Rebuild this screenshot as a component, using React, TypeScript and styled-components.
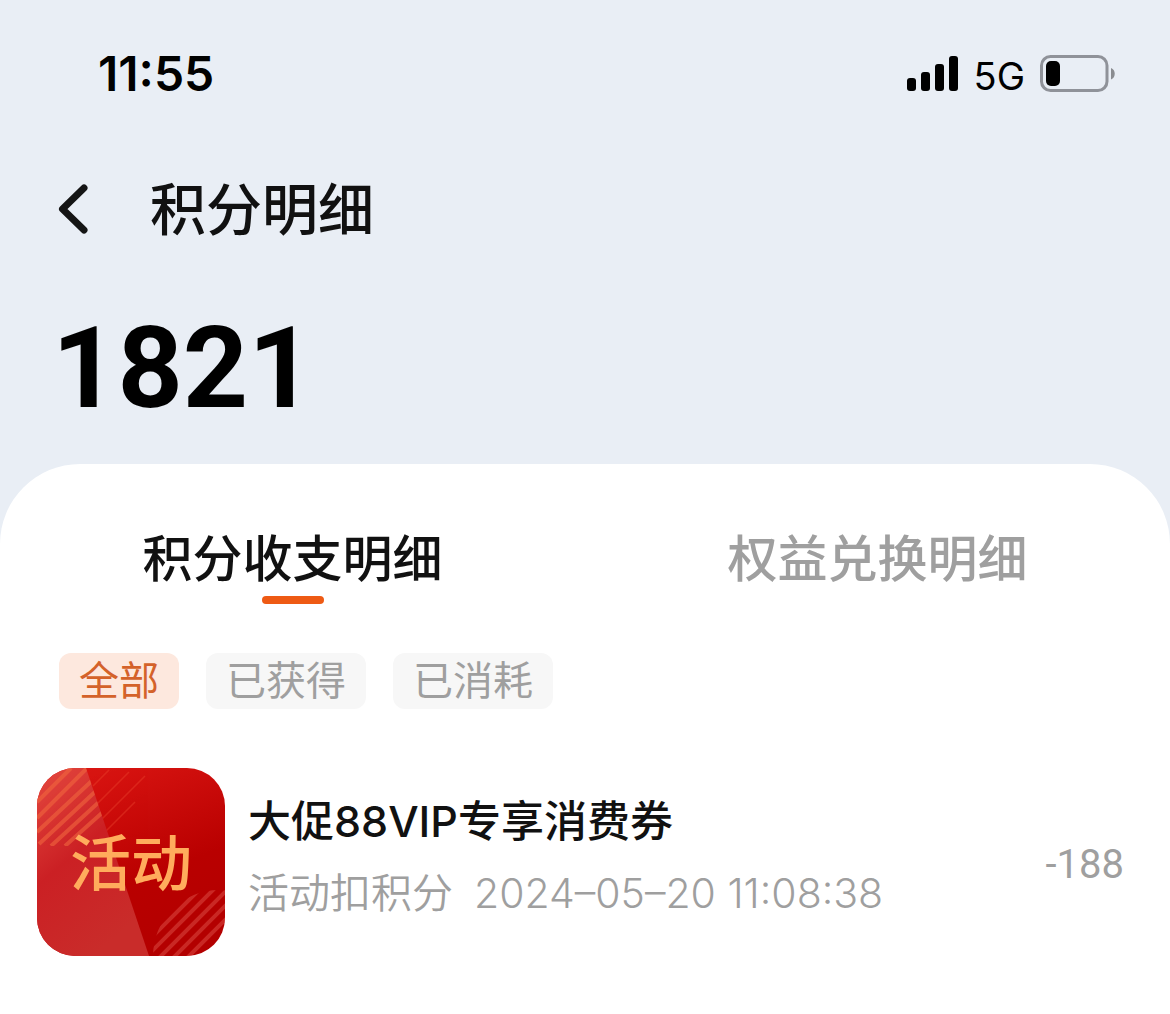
import React, { useState } from "react";
import styled, { createGlobalStyle } from "styled-components";

const cjk = `"Noto Sans CJK SC", sans-serif`;

const GlobalStyle = createGlobalStyle`
  * { box-sizing: border-box; }
  body {
    margin: 0;
    background: #fff;
    color: #111;
    font-family: Inter, ${cjk};
  }
  button { border: 0; padding: 0; background: none; font: inherit; cursor: pointer; }
  h1, h2, p { margin: 0; font-weight: inherit; }
`;

const Page = styled.div`
  min-height: 100vh;
  display: flex;
  flex-direction: column;
  background: #e9eef5;
`;

const StatusBar = styled.div`
  display: flex;
  align-items: center;
  justify-content: space-between;
  height: 150px;
  padding: 0 54px 2px 98px;
  color: #000;
`;

const Clock = styled.time`
  font-size: 48px;
  font-weight: 600;
  line-height: 56px;
`;

const StatusIcons = styled.div`
  display: flex;
  align-items: center;
  gap: 15px;
  svg { display: block; }
`;

const Network = styled.span`
  padding-top: 4px;
  font-size: 38px;
  font-weight: 400;
  line-height: 48px;
`;

const NavBar = styled.header`
  display: flex;
  align-items: center;
  gap: 60px;
  height: 120px;
  padding: 0 56px;
`;

const BackButton = styled.button`
  display: flex;
  width: 34px;
  height: 56px;
`;

const Title = styled.h1`
  font-size: 56px;
  font-weight: 500;
  line-height: 72px;
`;

const Balance = styled.p`
  padding: 28px 52px 0;
  height: 194px;
  font-family: Roboto, sans-serif;
  font-size: 114px;
  font-weight: 700;
  line-height: 140px;
  color: #000;
`;

const Sheet = styled.main`
  flex: 1;
  background: #fff;
  border-radius: 80px 80px 0 0;
  padding-top: 58px;
`;

const Tabs = styled.div`
  display: grid;
  grid-template-columns: 1fr 1fr;
`;

const Tab = styled.button<{ $active: boolean }>`
  display: flex;
  flex-direction: column;
  align-items: center;
  height: 82px;
  font-size: 50px;
  font-weight: 500;
  line-height: 74px;
  color: ${(p) => (p.$active ? "#111" : "#9f9f9f")};
  &::after {
    content: "";
    width: 62px;
    height: 8px;
    border-radius: 4px;
    flex: none;
    background: ${(p) => (p.$active ? "#ee5a14" : "transparent")};
  }
`;

const Filters = styled.div`
  display: flex;
  gap: 27px;
  padding: 49px 59px 0;
`;

const Chip = styled.button<{ $active: boolean }>`
  height: 56px;
  padding: 0 20px;
  border-radius: 12px;
  font-size: 40px;
  line-height: 56px;
  background: ${(p) => (p.$active ? "#fde8de" : "#f7f7f7")};
  color: ${(p) => (p.$active ? "#d4622a" : "#9f9f9f")};
`;

const Records = styled.ul`
  list-style: none;
  margin: 0;
  padding: 59px 46px 58px 37px;
`;

const Record = styled.li`
  display: flex;
  align-items: center;
  gap: 23px;
`;

const Badge = styled.div`
  position: relative;
  flex: none;
  display: grid;
  place-items: center;
  width: 188px;
  height: 188px;
  padding-top: 4px;
  border-radius: 38px;
  overflow: hidden;
  color: #ffac5c;
  font-size: 61px;
  font-weight: 500;
  line-height: 80px;
  svg { position: absolute; inset: 0; width: 100%; height: 100%; }
  span { position: relative; }
`;

const Details = styled.div`
  flex: 1;
  min-width: 0;
  padding-bottom: 11px;
`;

const Name = styled.h2`
  font-size: 43px;
  font-weight: 450;
  line-height: 64px;
`;

const Meta = styled.p`
  display: flex;
  gap: 21px;
  margin-top: 8px;
  font-size: 41px;
  line-height: 64px;
  color: #9f9f9f;
`;

const MetaLabel = styled.span`
  font-weight: 350;
`;

const MetaTime = styled.time`
  font-weight: 300;
`;

const Amount = styled.span`
  padding-top: 6px;
  font-family: Roboto, sans-serif;
  font-size: 40px;
  line-height: 48px;
  color: #9f9f9f;
`;

const SignalIcon = () => (
  <svg width="52" height="36" viewBox="0 0 52 36" aria-hidden="true">
    <rect x="0" y="22" width="9" height="13" rx="3" />
    <rect x="14" y="16" width="9" height="19" rx="3" />
    <rect x="28" y="8" width="9" height="27" rx="3" />
    <rect x="42" y="0" width="9" height="35" rx="3" />
  </svg>
);

const BatteryIcon = () => (
  <svg width="76" height="38" viewBox="0 0 76 38" aria-hidden="true">
    <rect x="1.5" y="1.5" width="65.5" height="34" rx="9" fill="none" stroke="#8f9299" strokeWidth="3" />
    <rect x="6" y="6" width="14" height="25" rx="5" fill="#000" />
    <path d="M71 13c5 2 5 9.500 0 11.500z" fill="#8a8c90" />
  </svg>
);

const BackIcon = () => (
  <svg width="34" height="56" viewBox="0 0 34 56" aria-hidden="true">
    <path d="M28 6 6.500 27l21.500 21" fill="none" stroke="#151515" strokeWidth="7" strokeLinecap="round" strokeLinejoin="round" />
  </svg>
);

const BadgeArt = () => (
  <svg viewBox="0 0 188 188" aria-hidden="true">
    <defs>
      <linearGradient id="base" x1="0.3" y1="0" x2="0.7" y2="1">
        <stop offset="0" stopColor="#d91512" />
        <stop offset="0.6" stopColor="#b90000" />
        <stop offset="1" stopColor="#b30000" />
      </linearGradient>
      <linearGradient id="fold" x1="0" y1="0" x2="0.5" y2="1">
        <stop offset="0" stopColor="#e54a40" />
        <stop offset="0.5" stopColor="#cb2024" />
        <stop offset="1" stopColor="#c92c2a" />
      </linearGradient>
      <clipPath id="foldArea"><path d="M0 0H49L75 78H0z" /></clipPath>
      <clipPath id="bottomDisc"><circle cx="182" cy="188" r="66" /></clipPath>
    </defs>
    <rect width="188" height="188" fill="url(#base)" />
    <g stroke="#e8412c" strokeWidth="1.500" opacity="0.45">
      <path d="M56 18L72 2M60 36L92 4M64 52L108 8M66 66L98 34" />
    </g>
    <path d="M0 0H49L112 188H0z" fill="url(#fold)" />
    <g clipPath="url(#foldArea)" stroke="#f0663f" strokeWidth="4" opacity="0.6">
      <path d="M0 34L34 0M0 50L50 0M0 64L60 8M2 76L60 22M14 78L62 34M28 78L66 44" />
    </g>
    <g clipPath="url(#bottomDisc)" stroke="#d8433c" strokeWidth="4" opacity="0.6">
      {[270, 284, 298, 312, 326, 340].map((n) => (
        <path key={n} d={`M${n - 190} 190L190 ${n - 190}`} />
      ))}
    </g>
  </svg>
);

const tabs = ["积分收支明细", "权益兑换明细"];
const filters = ["全部", "已获得", "已消耗"];

export default function App() {
  const [tab, setTab] = useState(0);
  const [filter, setFilter] = useState(0);

  return (
    <Page>
      <GlobalStyle />
      <StatusBar>
        <Clock>11:55</Clock>
        <StatusIcons>
          <SignalIcon />
          <Network>5G</Network>
          <BatteryIcon />
        </StatusIcons>
      </StatusBar>
      <NavBar>
        <BackButton aria-label="返回"><BackIcon /></BackButton>
        <Title>积分明细</Title>
      </NavBar>
      <Balance>1821</Balance>
      <Sheet>
        <Tabs role="tablist">
          {tabs.map((label, i) => (
            <Tab key={label} role="tab" aria-selected={tab === i} $active={tab === i} onClick={() => setTab(i)}>
              {label}
            </Tab>
          ))}
        </Tabs>
        <Filters>
          {filters.map((label, i) => (
            <Chip key={label} aria-pressed={filter === i} $active={filter === i} onClick={() => setFilter(i)}>
              {label}
            </Chip>
          ))}
        </Filters>
        <Records>
          <Record>
            <Badge><BadgeArt /><span>活动</span></Badge>
            <Details>
              <Name>大促88VIP专享消费券</Name>
              <Meta>
                <MetaLabel>活动扣积分</MetaLabel>
                <MetaTime>2024–05–20 11:08:38</MetaTime>
              </Meta>
            </Details>
            <Amount>-188</Amount>
          </Record>
        </Records>
      </Sheet>
    </Page>
  );
}
